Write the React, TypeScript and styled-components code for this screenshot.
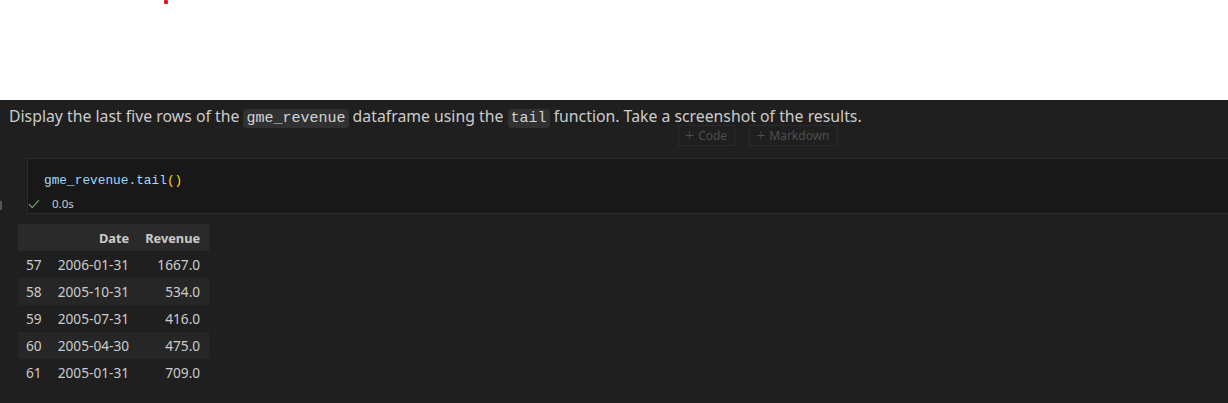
import React from "react";
import styled, { createGlobalStyle } from "styled-components";

const Global = createGlobalStyle`
  html, body { margin: 0; padding: 0; background: #1f1f1f; }
  body { width: 1228px; height: 403px; overflow: hidden; }
`;

const Page = styled.div`
  width: 1228px;
  height: 403px;
  display: flex;
  flex-direction: column;
  font-family: "Noto Sans", "Segoe UI", sans-serif;
`;

const TopArea = styled.div`
  height: 100px;
  background: #ffffff;
  position: relative;
  flex: none;
`;

const RedDot = styled.span`
  position: absolute;
  left: 164px;
  top: 0px;
  width: 4px;
  height: 4px;
  border-radius: 1px;
  background: #e81123;
`;

const Notebook = styled.div`
  flex: 1;
  background: #1f1f1f;
  display: flex;
  flex-direction: column;
`;

const MarkdownCell = styled.div`
  position: relative;
  height: 58px;
  padding: 8px 0 0 9px;
  box-sizing: border-box;
  color: #cccccc;
  font-size: 15.8px;
  line-height: 16px;
`;

const InlineCode = styled.code`
  font-family: "Liberation Mono", "DejaVu Sans Mono", monospace;
  font-size: 15px;
  color: #d4d4d4;
  background: #313131;
  border-radius: 4px;
  padding: 1px 3px;
`;

const InsertBar = styled.div`
  position: absolute;
  left: 678px;
  top: 25px;
  display: flex;
  gap: 14px;
`;

const InsertButton = styled.div`
  height: 21px;
  box-sizing: border-box;
  border: 1px solid #2a2a2a;
  display: flex;
  align-items: center;
  gap: 4px;
  padding: 0 7px 0 6px;
  color: #4e4e4e;
  font-size: 12px;
  line-height: 14px;
`;

const Plus = styled.span`
  font-size: 16px;
  font-weight: 300;
  line-height: 1;
  margin-top: -2px;
`;

const CodeRow = styled.div`
  position: relative;
  display: flex;
`;

const Gutter = styled.div`
  width: 27px;
  flex: none;
  position: relative;
`;

const GutterMark = styled.span`
  position: absolute;
  left: 0;
  top: 43px;
  width: 2px;
  height: 9px;
  background: #555555;
`;

const CodeCell = styled.div`
  flex: 1;
  height: 56px;
  box-sizing: border-box;
  border: 1px solid #2b2b2b;
  border-right: none;
  background: #181818;
  padding: 12px 0 0 16px;
`;

const CodeLine = styled.div`
  font-family: "Liberation Mono", "DejaVu Sans Mono", monospace;
  font-size: 12.8px;
  line-height: 19px;
  color: #9cdcfe;
`;

const Tok = styled.span<{ $c: string }>`
  color: ${(p) => p.$c};
`;

const Status = styled.div`
  display: flex;
  align-items: center;
  gap: 12px;
  margin: 6px 0 0 -16px;
  font-size: 11.5px;
  color: #cccccc;
`;

const Output = styled.div`
  padding: 10px 0 0 18px;
`;

const Table = styled.table`
  border-collapse: collapse;
  font-family: "Noto Sans", "Segoe UI", sans-serif;
  font-size: 13.7px;
  color: #cccccc;
`;

const Row = styled.tr<{ $alt?: boolean; $head?: boolean }>`
  height: 27px;
  background: ${(p) => (p.$head ? "#2a2a2a" : p.$alt ? "#262626" : "transparent")};
`;

const Th = styled.th`
  text-align: right;
  font-weight: 700;
  font-size: 12.8px;
  padding: 0 8px;
  color: #cccccc;
  &:last-child { padding-right: 9px; }
`;

const Td = styled.td<{ $left?: boolean }>`
  text-align: ${(p) => (p.$left ? "left" : "right")};
  padding: 0 8px;
  &:last-child { padding-right: 9px; }
`;

const rows: [string, string, string][] = [
  ["57", "2006-01-31", "1667.0"],
  ["58", "2005-10-31", "534.0"],
  ["59", "2005-07-31", "416.0"],
  ["60", "2005-04-30", "475.0"],
  ["61", "2005-01-31", "709.0"],
];

export default function App() {
  return (
    <>
      <Global />
      <Page>
        <TopArea>
          <RedDot />
        </TopArea>
        <Notebook>
          <MarkdownCell>
            Display the last five rows of the <InlineCode>gme_revenue</InlineCode> dataframe using the{" "}
            <InlineCode>tail</InlineCode> function. Take a screenshot of the results.
            <InsertBar>
              <InsertButton>
                <Plus>+</Plus>Code
              </InsertButton>
              <InsertButton>
                <Plus>+</Plus>Markdown
              </InsertButton>
            </InsertBar>
          </MarkdownCell>
          <CodeRow>
            <Gutter>
              <GutterMark />
            </Gutter>
            <CodeCell>
              <CodeLine>
                gme_revenue<Tok $c="#cccccc">.</Tok>
                <Tok $c="#9cdcfe">tail</Tok>
                <Tok $c="#ffd700">()</Tok>
              </CodeLine>
              <Status>
                <svg width="12" height="10" viewBox="0 0 12 10">
                  <path d="M1 5.2 L4.2 8.6 L11 1.2" fill="none" stroke="#6aa56a" strokeWidth="1.2" />
                </svg>
                <span>0.0s</span>
              </Status>
            </CodeCell>
          </CodeRow>
          <Output>
            <Table>
              <thead>
                <Row $head>
                  <Th></Th>
                  <Th>Date</Th>
                  <Th>Revenue</Th>
                </Row>
              </thead>
              <tbody>
                {rows.map((r, i) => (
                  <Row key={r[0]} $alt={i % 2 === 1}>
                    <Td $left>{r[0]}</Td>
                    <Td>{r[1]}</Td>
                    <Td>{r[2]}</Td>
                  </Row>
                ))}
              </tbody>
            </Table>
          </Output>
        </Notebook>
      </Page>
    </>
  );
}
